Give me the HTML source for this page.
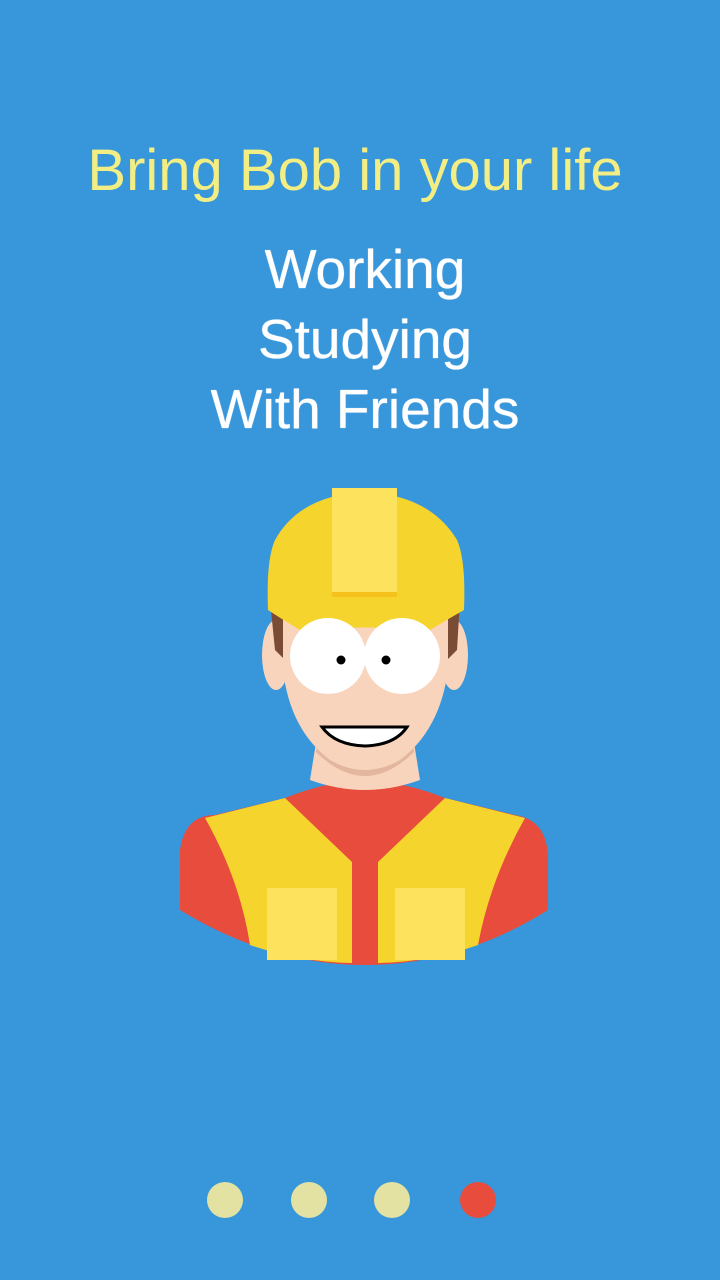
<!DOCTYPE html>
<html><head><style>
html,body{margin:0;padding:0;}
body{width:720px;height:1280px;background:#3897db;position:relative;overflow:hidden;font-family:"Liberation Sans",sans-serif;}
.t{position:absolute;left:0;width:710px;text-align:center;}
.y{top:137px;font-size:58px;color:#f3ee84;}
.w{font-size:55px;color:#fff;font-weight:500;text-shadow:0 0 0.6px #fff,0 0 0.6px #fff;}
.dot{position:absolute;top:1182px;width:36px;height:36px;border-radius:50%;background:#e3e2a2;}
</style></head><body>
<div class="t y">Bring Bob in your life</div>
<div class="t w" style="top:237px;left:10px">Working</div>
<div class="t w" style="top:307px;left:10px">Studying</div>
<div class="t w" style="top:377px;left:10px">With Friends</div>
<svg width="720" height="1280" style="position:absolute;left:0;top:0">
 <!-- body -->
 <path d="M180 850 Q185 815 215 815 L285 798 Q330 780 365 782 Q400 780 445 798 L515 815 Q548 820 548 860 L548 910 Q460 965 365 965 Q270 965 180 910 Z" fill="#e74c3c"/>
 <path d="M205 818 L285 798 L352 862 L352 963 Q300 962 250 945 Q240 880 205 818 Z" fill="#f6d42e"/>
 <path d="M525 818 L445 798 L378 862 L378 963 Q430 962 478 945 Q490 880 525 818 Z" fill="#f6d42e"/>
 <rect x="267" y="888" width="70" height="72" fill="#fde35d"/>
 <rect x="395" y="888" width="70" height="72" fill="#fde35d"/>
 <!-- neck -->
 <path d="M318 730 L412 730 L420 780 Q365 800 310 780 Z" fill="#f8d4bd"/>
 <path d="M318 740 Q365 790 412 740 L414 752 Q365 800 316 752 Z" fill="#e2b79e"/>
 <!-- ears & hair -->
 <ellipse cx="276" cy="655" rx="14" ry="35" fill="#f8d4bd"/>
 <ellipse cx="454" cy="655" rx="14" ry="35" fill="#f8d4bd"/>
 <path d="M270 600 L285 600 L285 660 L275 650 Z" fill="#7a4b35"/>
 <path d="M460 600 L447 600 L447 660 L457 650 Z" fill="#7a4b35"/>
 <!-- face -->
 <path d="M283 600 L448 600 L448 670 Q440 730 400 760 Q365 780 330 760 Q290 730 283 670 Z" fill="#f8d4bd"/>
 <!-- helmet -->
 <path d="M268 610 Q266 560 275 540 Q300 495 365 492 Q430 495 457 540 Q466 560 464 610 Q450 618 430 630 Q365 625 300 630 Q280 618 268 610 Z" fill="#f6d42e"/>
 <rect x="332" y="488" width="65" height="105" fill="#fde35d"/>
 <rect x="332" y="592" width="65" height="5" fill="#f4c21a"/>
 <!-- eyes -->
 <circle cx="328" cy="656" r="38" fill="#fff"/>
 <circle cx="402" cy="656" r="38" fill="#fff"/>
 <circle cx="341" cy="660" r="4.5" fill="#000"/>
 <circle cx="386" cy="660" r="4.5" fill="#000"/>
 <!-- mouth -->
 <path d="M322 727 L407 727 Q395 745 365 746 Q335 745 322 727 Z" fill="#fff" stroke="#000" stroke-width="3"/>
</svg>
<div class="dot" style="left:207px"></div>
<div class="dot" style="left:291px"></div>
<div class="dot" style="left:374px"></div>
<div class="dot" style="left:460px;background:#e74c3c"></div>
</body></html>
